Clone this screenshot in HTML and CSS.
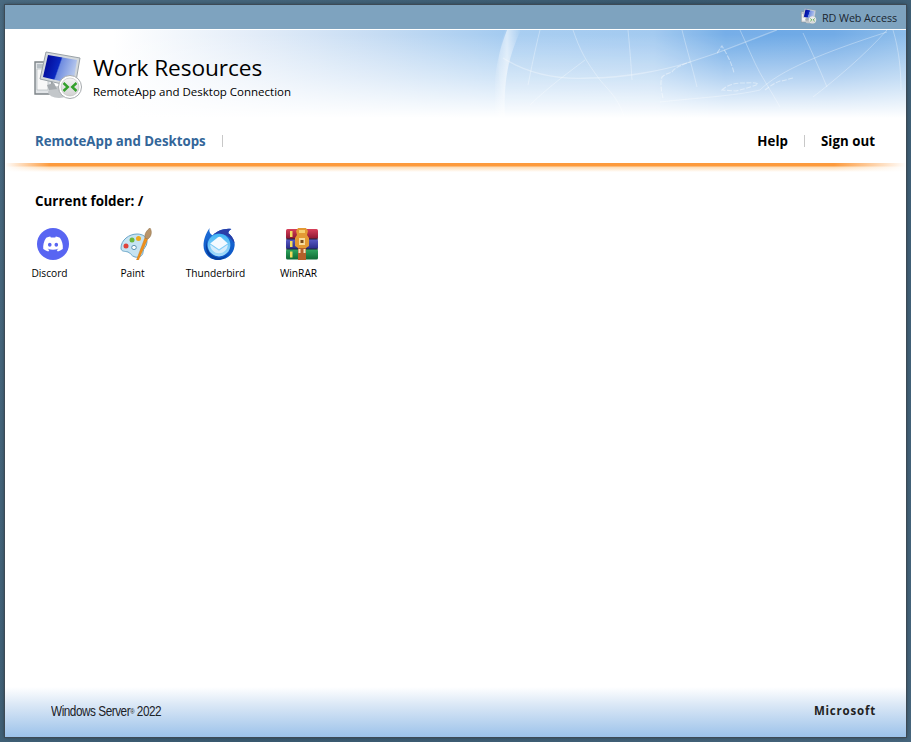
FILE: index.html
```html
<!DOCTYPE html>
<html lang="en">
<head>
<meta charset="utf-8">
<title>Work Resources</title>
<link rel="stylesheet" href="styles.css">
</head>
<body>
<svg class="defs" aria-hidden="true">
  <defs>
    <linearGradient id="screen" x1="0" y1="0" x2="1" y2="0.3">
      <stop offset="0" stop-color="#00008c"/>
      <stop offset="0.52" stop-color="#0a28c0"/>
      <stop offset="0.56" stop-color="#6f8ce0"/>
      <stop offset="1" stop-color="#b4c6ec"/>
    </linearGradient>
    <linearGradient id="badge" x1="0" y1="0" x2="0" y2="1">
      <stop offset="0" stop-color="#f4f4f4"/>
      <stop offset="1" stop-color="#d2d2d2"/>
    </linearGradient>
    <linearGradient id="bird" x1="0" y1="0" x2="0" y2="1">
      <stop offset="0" stop-color="#1f6fd8"/>
      <stop offset="1" stop-color="#0a55c4"/>
    </linearGradient>
    <linearGradient id="ball" x1="0" y1="0" x2="0" y2="1">
      <stop offset="0" stop-color="#3fb4f4"/>
      <stop offset="1" stop-color="#a8dcfa"/>
    </linearGradient>
    <linearGradient id="bookr" x1="0" y1="0" x2="0" y2="1">
      <stop offset="0" stop-color="#d8405a"/>
      <stop offset="1" stop-color="#8a1630"/>
    </linearGradient>
    <linearGradient id="bookb" x1="0" y1="0" x2="0" y2="1">
      <stop offset="0" stop-color="#5a5cc8"/>
      <stop offset="1" stop-color="#2a2c88"/>
    </linearGradient>
    <linearGradient id="bookg" x1="0" y1="0" x2="0" y2="1">
      <stop offset="0" stop-color="#30a860"/>
      <stop offset="1" stop-color="#0e6a34"/>
    </linearGradient>
    <linearGradient id="globeedge" x1="0" y1="0" x2="1" y2="0">
      <stop offset="0" stop-color="#fff" stop-opacity="0"/>
      <stop offset=".5" stop-color="#fff" stop-opacity=".55"/>
      <stop offset="1" stop-color="#fff" stop-opacity="0"/>
    </linearGradient>
    <symbol id="rdicon" viewBox="0 0 50 48">
      <path d="M1 11h17v32H1z" fill="#e2e5e8" stroke="#7d8488" stroke-width="1.400"/>
      <path d="M3 13h13v4H3z" fill="#b8c0c6"/>
      <path d="M3 18h11v21H3z" fill="#f8f8f8" stroke="#a8aeb2" stroke-width=".6"/>
      <ellipse cx="25" cy="41" rx="11" ry="6" fill="#c3c7ca"/>
      <path d="M13 34 20 32l3 6-8 1z" fill="#a5aaae"/>
      <path d="M12 1 46 7 41 36 6 28z" fill="#d4d9dc" stroke="#9aa2a7" stroke-width="1"/>
      <path d="M14 4 43 9 39 33 9 26z" fill="url(#screen)"/>
      <circle cx="36" cy="36" r="11.500" fill="#fff" stroke="#a6aaad" stroke-width="1"/>
      <circle cx="36" cy="36" r="9" fill="url(#badge)" stroke="#bbb" stroke-width=".6"/>
      <path d="M29.500 32 33.800 36l-4.300 4M42.500 32 38.200 36l4.300 4" fill="none" stroke="#34a02c" stroke-width="2.400"/>
    </symbol>
  </defs>
</svg>
<div class="window">
  <div class="topbar">
    <a class="rdlink">
      <svg class="rdlink-icon"><use href="#rdicon"/></svg>
      <span>RD Web Access</span>
    </a>
  </div>
  <header class="banner">
    <svg class="globe" viewBox="0 0 410 90" aria-hidden="true">
      <path d="M120 0H282L225 22 195 32 168 47 165 80 120 90H20C0 60 0 30 10 0z" fill="#fff" fill-opacity=".08"/>
      <path d="M-2 90C-2 50 2 25 12 0h14C14 25 8 50 10 90z" fill="url(#globeedge)"/>
      <g fill="none" stroke="#fff" stroke-opacity=".32" stroke-width="1">
        <path d="M8 28C30 42 60 50 95 48 130 48 170 40 195 32L222 23 282 0" stroke-width="1.300"/>
        <path d="M165 72C200 68 240 66 265 60 285 40 330 22 392 2"/>
        <path d="M133 0C135 20 136 35 137 50M187 0C192 20 198 40 202 57M245 0C252 15 258 30 265 43 272 55 280 68 285 77M308 3C316 20 325 40 332 57M392 0C370 25 340 50 318 67M78 0C85 20 90 30 105 50 115 62 125 70 130 90M90 30C70 45 50 60 35 75M45 0C40 20 36 40 33 55"/>
        <path d="M398 0c6 20 8 40 8 60"/>
      </g>
      <g fill="none" stroke="#fff" stroke-opacity=".42" stroke-width="1.100" stroke-dasharray="5 1.500">
        <path d="M168 68c-2-8-3-16-1-21 3-3 7-4 10-5 3-5 10-7 18-10M222 23c2-2 3-5 5-7 5 8 10 18 12 27"/>
        <path d="M227 60c5-5 13-7 20-7 6 0 12-1 16 1-6 3-14 5-22 7zM270 60c5-4 10-7 15-9 4 0 8-2 13-3"/>
      </g>
    </svg>
    <svg class="banner-icon"><use href="#rdicon"/></svg>
    <div class="banner-text">
      <h1>Work Resources</h1>
      <p>RemoteApp and Desktop Connection</p>
    </div>
  </header>
  <nav class="nav">
    <div class="nav-left">
      <a class="nav-current">RemoteApp and Desktops</a>
      <span class="sep"></span>
    </div>
    <div class="nav-right">
      <a>Help</a>
      <span class="sep"></span>
      <a>Sign out</a>
    </div>
  </nav>
  <div class="rule"></div>
  <main class="content">
    <h2>Current folder: /</h2>
    <ul class="apps">
      <li class="app">
        <svg class="app-icon" viewBox="0 0 32 32">
          <circle cx="16" cy="16" r="16" fill="#5865f2"/>
          <path transform="translate(6.200 6.200) scale(.82)" fill="#fff" d="M20.317 4.370a19.790 19.790 0 0 0-4.885-1.515.074.074 0 0 0-.079.037c-.210.375-.444.865-.608 1.250a18.270 18.270 0 0 0-5.487 0 12.600 12.600 0 0 0-.617-1.250.077.077 0 0 0-.079-.037A19.740 19.740 0 0 0 3.677 4.370a.070.070 0 0 0-.032.028C.533 9.046-.320 13.580.099 18.058a.082.082 0 0 0 .031.056c2.053 1.508 4.041 2.423 5.993 3.030a.078.078 0 0 0 .084-.028c.462-.630.873-1.295 1.226-1.994a.076.076 0 0 0-.042-.106 13.100 13.100 0 0 1-1.872-.892.077.077 0 0 1-.008-.128c.126-.094.252-.192.372-.291a.074.074 0 0 1 .078-.011c3.928 1.793 8.180 1.793 12.061 0a.074.074 0 0 1 .079.010c.120.099.246.198.373.292a.077.077 0 0 1-.007.128 12.300 12.300 0 0 1-1.873.891.077.077 0 0 0-.041.107c.360.698.772 1.363 1.225 1.993a.076.076 0 0 0 .084.029c1.961-.607 3.950-1.522 6.002-3.030a.077.077 0 0 0 .031-.055c.500-5.177-.838-9.674-3.548-13.660a.061.061 0 0 0-.031-.029zM8.020 15.331c-1.183 0-2.157-1.086-2.157-2.419s.956-2.419 2.157-2.419c1.211 0 2.176 1.095 2.157 2.419 0 1.333-.956 2.419-2.157 2.419zm7.975 0c-1.183 0-2.157-1.086-2.157-2.419s.955-2.419 2.157-2.419c1.210 0 2.175 1.095 2.157 2.419 0 1.333-.947 2.419-2.157 2.419z"/>
        </svg>
        <span>Discord</span>
      </li>
      <li class="app">
        <svg class="app-icon" viewBox="0 0 32 32">
          <path d="M1 20C1 12 9 6 17 6c6 0 10 3 10 8 0 5-4 6-4 10 0 4-4 6-8 5-4-1-4-4-7-5-3-1-7 0-7-4z" fill="#c6e3f2" stroke="#6aa6c8" stroke-width="1"/>
          <circle cx="6" cy="18" r="2.500" fill="#e0423a"/>
          <circle cx="12" cy="12" r="2.500" fill="#6cb83c"/>
          <circle cx="18.500" cy="10.500" r="2.500" fill="#f0a81e"/>
          <ellipse cx="14" cy="19.500" rx="2.300" ry="2.100" fill="#fff" stroke="#5f93b0"/>
          <path d="M16.500 32 25 9.500l2.800 1.200L18.500 32z" fill="#f0901a" stroke="#c26f12" stroke-width=".4"/>
          <path d="M25 10c-1-4 2-8 5-10 2 3 2 8-2 11z" fill="#b8946a" stroke="#8e7048" stroke-width=".5"/>
        </svg>
        <span>Paint</span>
      </li>
      <li class="app">
        <svg class="app-icon" viewBox="1 1 30 31">
          <path d="M7 1c-1 3 0 6 3 7 4-4 11-7 18-6-2 1-3 3-3 4 4 3 7 8 6 13-1 8-8 13-16 13C7 32 1 26 1 18c0-5 2-12 6-17z" fill="url(#bird)"/>
          <path d="M10 8c4-4 11-7 18-6-2 1-3 3-3 4 3 2 6 6 6 10-3-5-7-8-11-9-4-1-7-1-10 1z" fill="#2a3fa8"/>
          <path d="M5 11c-3 9 2 18 11 19 6 0 10-4 12-9-3 7-8 11-13 11C8 32 0 25 5 11z" fill="#073f9c"/>
          <circle cx="16" cy="17.500" r="11" fill="url(#ball)"/>
          <path d="M7.500 16 15 10c1-.7 2-.7 3 0l6.500 6L16 21.500z" fill="#f4faff"/>
          <path d="M7.500 17 16 23l8.500-6c0 5-4 8.500-8.500 8.500s-8.500-3.500-8.500-8.500z" fill="#d6ecfb"/>
        </svg>
        <span>Thunderbird</span>
      </li>
      <li class="app">
        <svg class="app-icon" viewBox="0 0 32 32">
          <rect x="0" y="1" width="32" height="10" rx="1.500" fill="url(#bookr)"/>
          <rect x="0" y="11" width="32" height="10" rx="1.500" fill="url(#bookb)"/>
          <rect x="0" y="21" width="32" height="10.500" rx="1.500" fill="url(#bookg)"/>
          <path d="M0 10.500h32v1H0zM0 20.500h32v1H0z" fill="#20243a"/>
          <path d="M4 3h2.500v6H4zM4 13h2.500v6H4zM4 23.500h2.500v6H4z" fill="#f2dc5c"/>
          <path d="M12 0h8l2 3-1 4 2 3v8l-3 2v12h-8V20l-3-2v-8l2-3-1-4z" fill="#e39a34"/>
          <path d="M13 2h6v3h-6z" fill="#f6d070"/>
          <path d="M13 10h6v7h-6z" fill="#f7dc9c"/>
          <path d="M14.500 12h3v3h-3z" fill="#7a4a18"/>
          <path d="M12 20h8v12h-8z" fill="#b5602a"/>
          <path d="M12.500 21h2v4h-2zM17.500 21h2v4h-2z" fill="#f4e2bc"/>
        </svg>
        <span>WinRAR</span>
      </li>
    </ul>
  </main>
  <footer class="footer">
    <span class="footer-os">Windows Server<sup>®</sup> 2022</span>
    <span class="footer-ms">Microsoft</span>
  </footer>
</div>
</body>
</html>
```

FILE: styles.css
```css
* { box-sizing: border-box; }

html, body { height: 100%; }

body {
  margin: 0;
  padding: 5px;
  overflow: hidden;
  background: linear-gradient(120deg, #4a6a80, #3a5a70 50%, #46657c);
  font-family: "Open Sans", "Noto Sans", sans-serif;
  color: #000;
}

.defs { display: block; width: 0; height: 0; position: absolute; }

.window {
  height: 100%;
  display: flex;
  flex-direction: column;
  background: #fff;
  outline: 1px solid #3d4a55;
  box-shadow: 0 0 4px rgba(0, 0, 0, .5);
}

.topbar {
  flex: none;
  height: 25px;
  display: flex;
  justify-content: flex-end;
  align-items: center;
  padding-right: 9px;
  background: #7ea3bf;
  border-bottom: 1px solid #fff;
}

.rdlink {
  display: flex;
  align-items: center;
  gap: 5px;
  font-size: 10.800px;
  color: #1a2530;
  letter-spacing: -.1px;
}

.rdlink-icon { width: 16px; height: 16px; margin-top: -3px; }

.banner {
  position: relative;
  flex: none;
  height: 88px;
  display: flex;
  overflow: hidden;
  background:
    linear-gradient(to bottom, rgba(255, 255, 255, 0) 5%, rgba(255, 255, 255, .5) 55%, #fff 100%),
    linear-gradient(to right, #fff 0%, #fff 12%, #e2ecf8 28%, #c4dbf3 42%, #a2caf0 56%, #9cc6ef 72%, #6ba8e6 80%, #72abe6 92%, #8dbdeb 100%);
}

.globe {
  position: absolute;
  top: 0;
  left: 490px;
  width: 410px;
  height: 90px;
}

.banner-icon {
  position: relative;
  flex: none;
  width: 50px;
  height: 48px;
  margin: 21px 0 0 29px;
}

.banner-text { position: relative; margin: 22px 0 0 9px; }

.banner-text h1 {
  margin: 0;
  font-size: 22.700px;
  line-height: 32px;
  font-weight: 400;
  letter-spacing: -.1px;
  white-space: nowrap;
}

.banner-text p {
  margin: 0;
  font-size: 11.500px;
  line-height: 15px;
  white-space: nowrap;
}

.nav {
  flex: none;
  height: 45px;
  display: flex;
  justify-content: space-between;
  align-items: center;
  padding: 0 31px 0 30px;
  font-size: 13.250px;
  font-weight: 700;
}

.nav-left, .nav-right { display: flex; align-items: center; }

.nav-current { color: #336699; }

.nav .sep {
  width: 1px;
  height: 12px;
  margin: 0 16px;
  background: #c8c8c8;
}

.nav-right a { letter-spacing: .05px; }

.rule {
  flex: none;
  height: 9px;
  background:
    linear-gradient(to right, #fff, rgba(255, 255, 255, 0) 5%, rgba(255, 255, 255, 0) 92%, #fff),
    linear-gradient(to bottom, #fd9a3c 0, #fd9a3c 3px, #fedcb4 4px, #fff 100%);
}

.content {
  flex: 1;
  min-height: 0;
  padding: 20px 0 0;
}

.content h2 {
  margin: 0 0 0 30px;
  font-size: 13.400px;
  line-height: 18px;
  font-weight: 700;
}

.apps {
  display: flex;
  margin: 18px 0 0 3px;
  padding: 0;
  list-style: none;
}

.app {
  width: 83px;
  display: flex;
  flex-direction: column;
  align-items: center;
  font-size: 10.200px;
  line-height: 14px;
}

.app-icon {
  width: 32px;
  height: 32px;
  margin: 0 0 6px 7px;
}

.footer {
  flex: none;
  height: 50px;
  display: flex;
  justify-content: space-between;
  align-items: center;
  padding: 0 30px 3px 46px;
  background: linear-gradient(to bottom, #fff 0, #dbe8f6 35%, #9cc2ea 100%);
}

.footer-os {
  font-family: "Liberation Sans", sans-serif;
  font-size: 14px;
  letter-spacing: -.55px;
  color: #1c2228;
  transform: scaleX(.84);
  transform-origin: left center;
}

.footer-os sup { font-size: 7px; line-height: 0; vertical-align: 2px; }

.footer-ms {
  font-size: 11.500px;
  font-weight: 700;
  letter-spacing: .8px;
  color: #222;
}
```
